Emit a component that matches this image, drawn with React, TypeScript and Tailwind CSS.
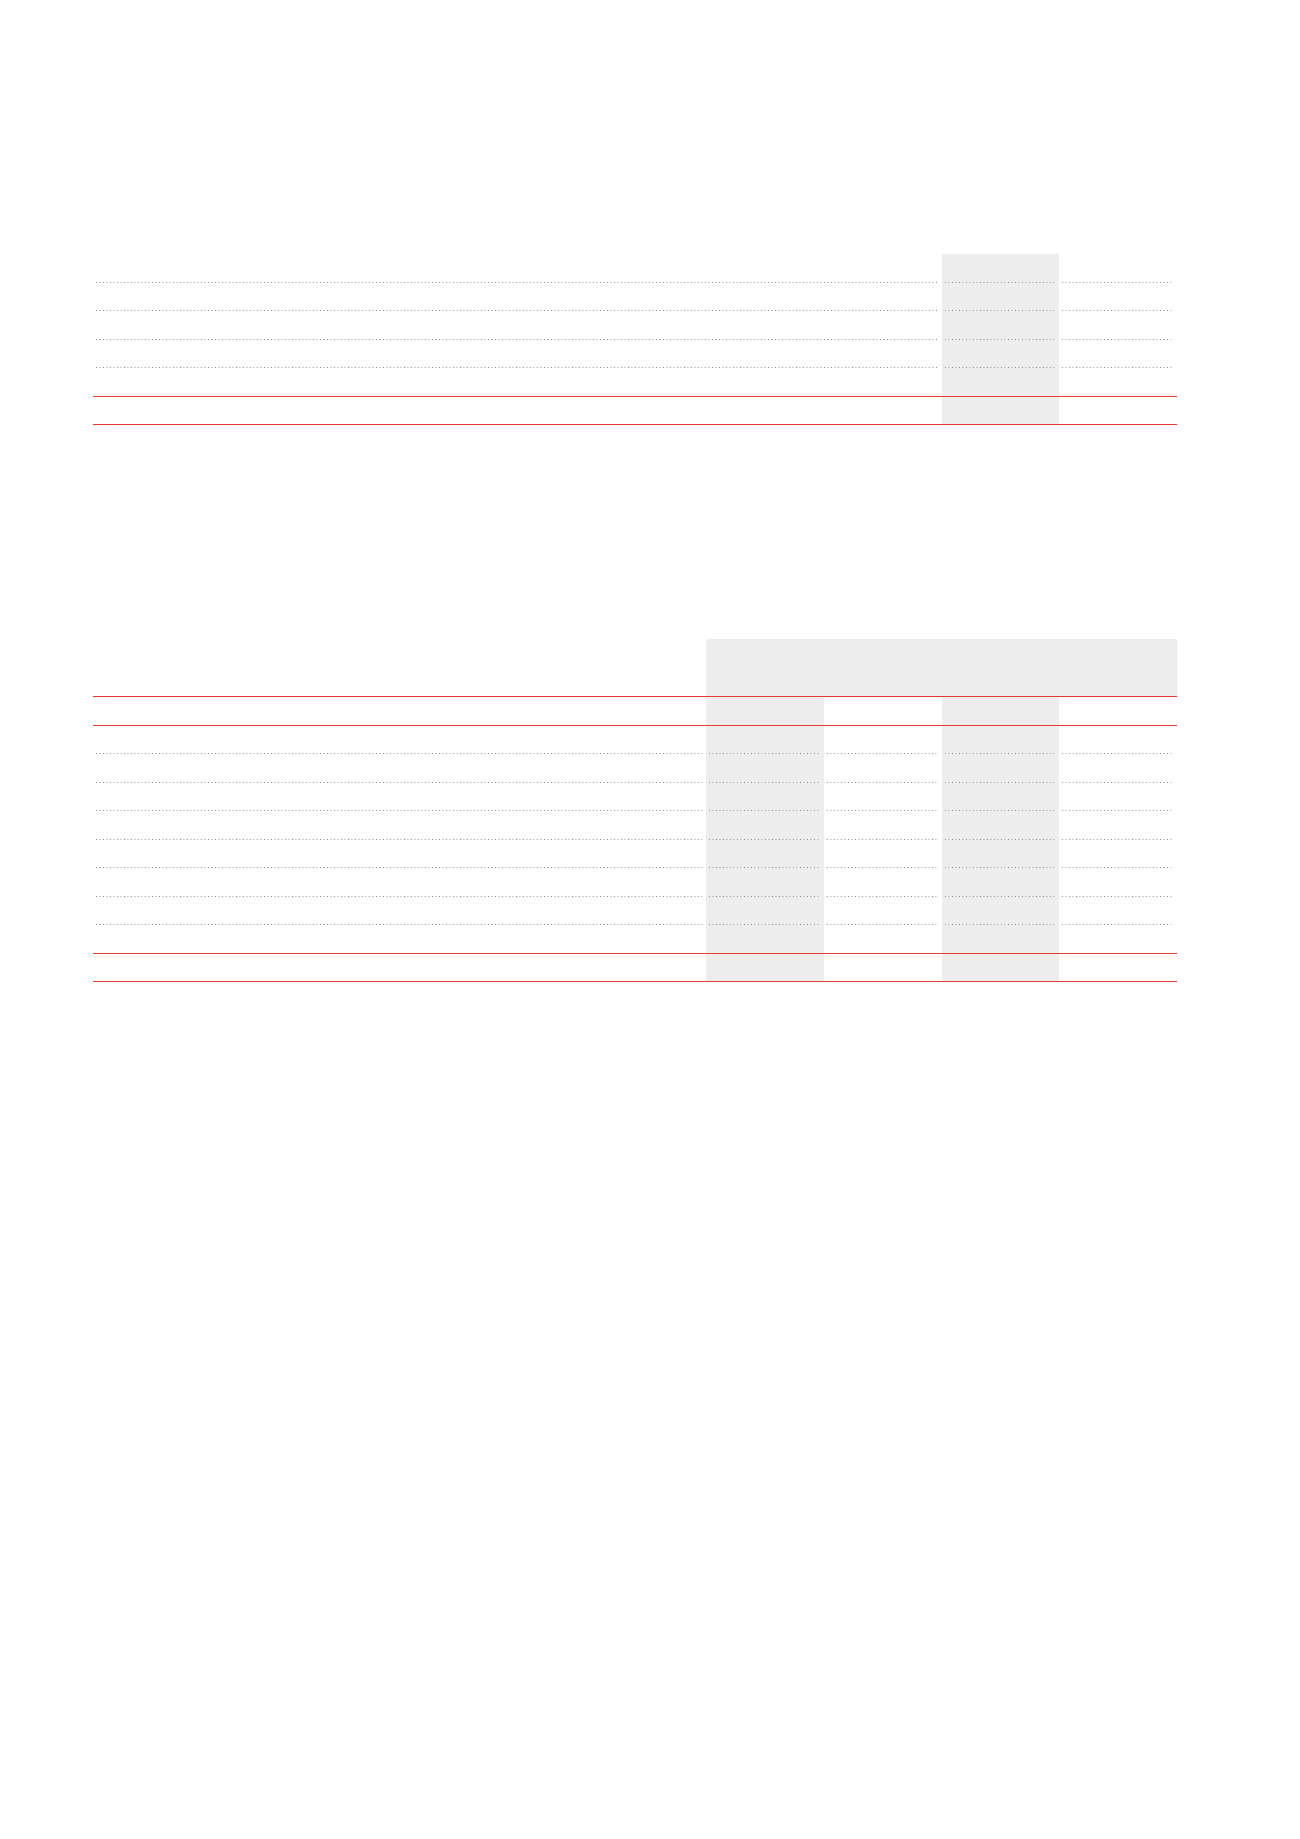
const RED = "border-[#e53d32]";

function Cell({ gray, line }: { gray?: boolean; line: "dot" | "red" | "none" }) {
  return (
    <div
      className={`h-[28.5px] flex flex-col justify-end ${gray ? "bg-[#ededed]" : ""} ${line === "red" ? `border-b ${RED}` : ""}`}
    >
      {line === "dot" && (
        <div className="h-px mx-[3px] bg-[linear-gradient(to_right,#858585_1px,transparent_1px)] bg-[length:3.5px_1px] bg-repeat-x"></div>
      )}
    </div>
  );
}

export default function App() {
  const topRows: ("dot" | "red")[] = ["dot", "dot", "dot", "dot", "red", "red"];
  const bottomRows: ("dot" | "red")[] = ["red", "dot", "dot", "dot", "dot", "dot", "dot", "dot", "red", "red"];

  return (
    <div className="min-h-screen bg-white font-['Liberation_Sans',sans-serif] pl-[93px] pt-[254px]">
      {/* Table 1 */}
      <div className="grid grid-cols-[849px_117px_118px] w-[1084px]">
        {topRows.map((line, i) => (
          <div key={i} className="contents">
            <Cell line={line} />
            <Cell line={line} gray />
            <Cell line={line} />
          </div>
        ))}
      </div>

      {/* Table 2 */}
      <div className="mt-[214px] w-[1084px]">
        <div className="grid grid-cols-[613px_471px] border-b border-[#e53d32]">
          <div className="h-[57px]"></div>
          <div className="h-[57px] bg-[#ededed]"></div>
        </div>
        <div className="grid grid-cols-[613px_118px_118px_117px_118px]">
          {bottomRows.map((line, i) => (
            <div key={i} className="contents">
              <Cell line={line} />
              <Cell line={line} gray />
              <Cell line={line} />
              <Cell line={line} gray />
              <Cell line={line} />
            </div>
          ))}
        </div>
      </div>
    </div>
  );
}
